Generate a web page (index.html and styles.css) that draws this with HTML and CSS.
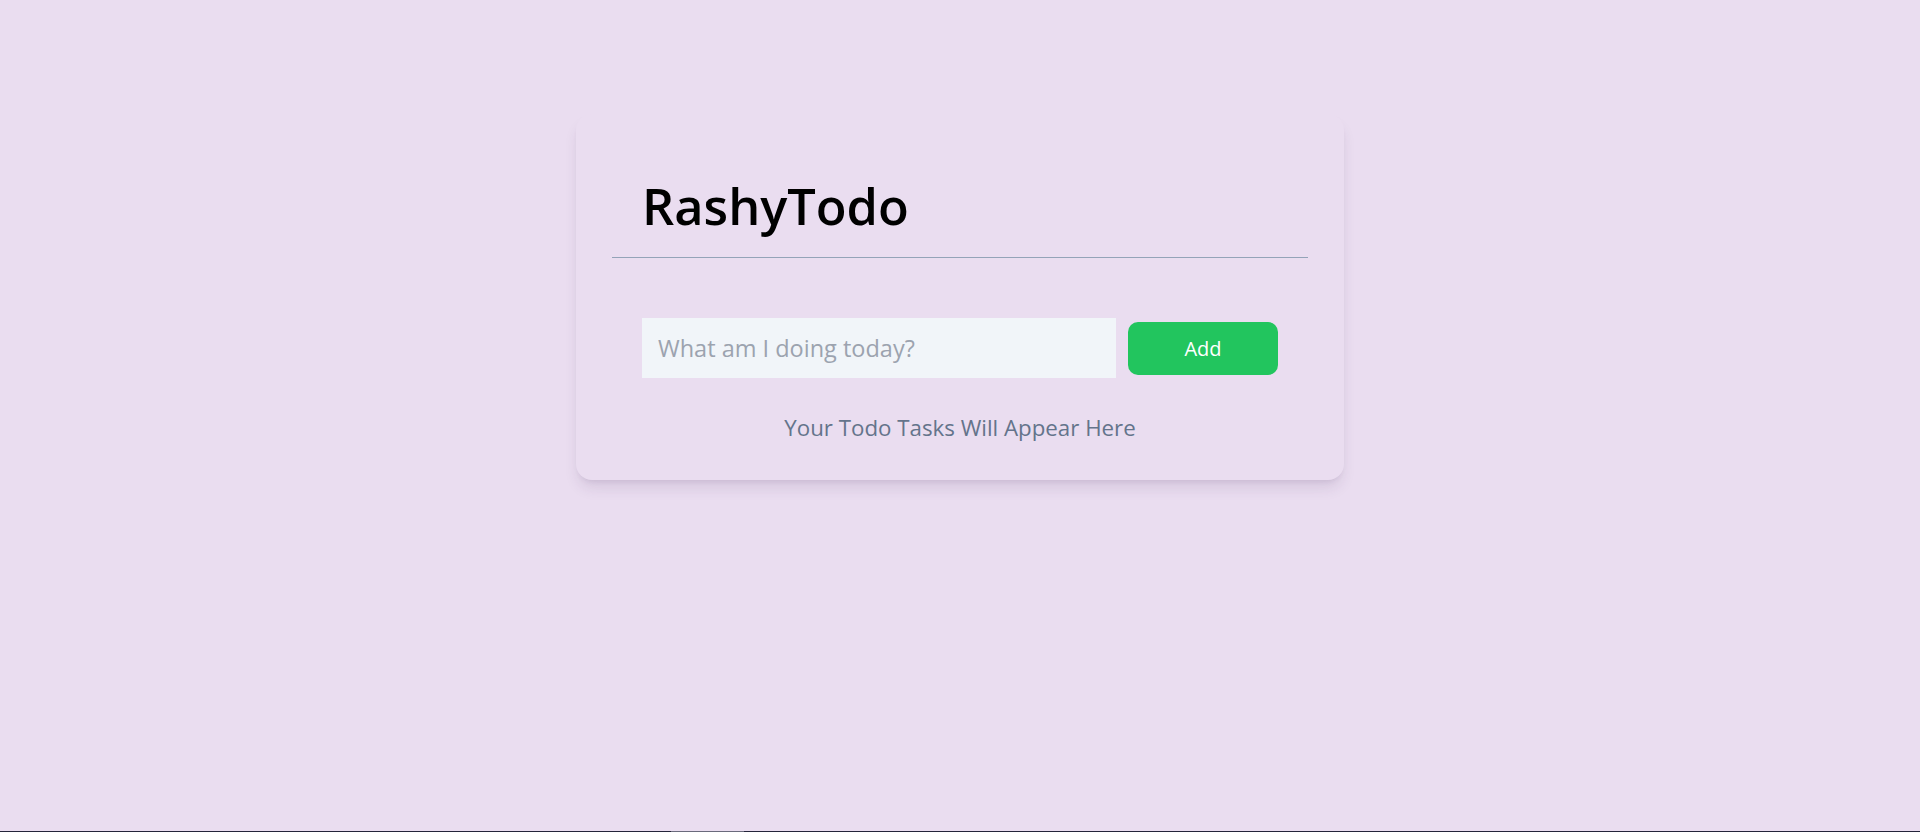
FILE: index.html
```html
<!DOCTYPE html>
<html lang="en">
<head>
<meta charset="utf-8">
<title>RashyTodo</title>
<link rel="stylesheet" href="styles.css">
</head>
<body>
  <main class="page">
    <section class="card">
      <header class="card-header">
        <h1 class="title">RashyTodo</h1>
      </header>
      <hr class="divider">
      <form class="todo-form" onsubmit="return false;">
        <input class="todo-input" type="text" placeholder="What am I doing today?">
        <button class="add-btn" type="submit">Add</button>
      </form>
      <p class="empty">Your Todo Tasks Will Appear Here</p>
    </section>
  </main>
  <div class="edge"><span class="edge-mark"></span></div>
</body>
</html>
```

FILE: styles.css
```css
* { box-sizing: border-box; }

html, body {
  margin: 0;
  padding: 0;
  height: 100%;
}

body {
  background: #eaddf0;
  font-family: "Open Sans", "Noto Sans", sans-serif;
  color: #000;
}

.page {
  padding-top: 114px;
}

.card {
  width: 768px;
  margin: 0 auto;
  background: #eaddf0;
  border-radius: 16px;
  box-shadow: 0 10px 15px -3px rgba(60, 30, 80, 0.12), 0 4px 6px -4px rgba(60, 30, 80, 0.12);
  padding: 0 36px 36px;
}

.card-header {
  padding: 62px 30px 0;
}

.title {
  margin: 0;
  font-size: 50.5px;
  line-height: 60px;
  font-weight: 600;
  color: #000;
}

.divider {
  margin: 21px 0 0;
  border: 0;
  height: 1px;
  background: #94a3b8;
}

.todo-form {
  display: flex;
  align-items: center;
  gap: 12px;
  margin: 60px 30px 0;
}

.todo-input {
  flex: 1;
  height: 60px;
  border: 0;
  outline: none;
  background: #f1f5f9;
  padding: 0 16px;
  font-family: inherit;
  font-size: 23.5px;
  color: #334155;
}

.todo-input::placeholder {
  color: #9ca3af;
}

.add-btn {
  width: 150px;
  height: 53px;
  border: 0;
  border-radius: 10px;
  background: #22c55e;
  color: #fff;
  font-family: inherit;
  font-size: 20px;
  cursor: pointer;
}

.empty {
  margin: 33px 0 0;
  text-align: center;
  font-size: 22.3px;
  line-height: 33px;
  color: #64748b;
}

.edge {
  position: fixed;
  left: 0;
  right: 0;
  bottom: 0;
  height: 1px;
  background: #24243a;
}

.edge-mark {
  position: absolute;
  left: 671px;
  width: 73px;
  top: 0;
  height: 1px;
  background: #6a6a7c;
}
```
